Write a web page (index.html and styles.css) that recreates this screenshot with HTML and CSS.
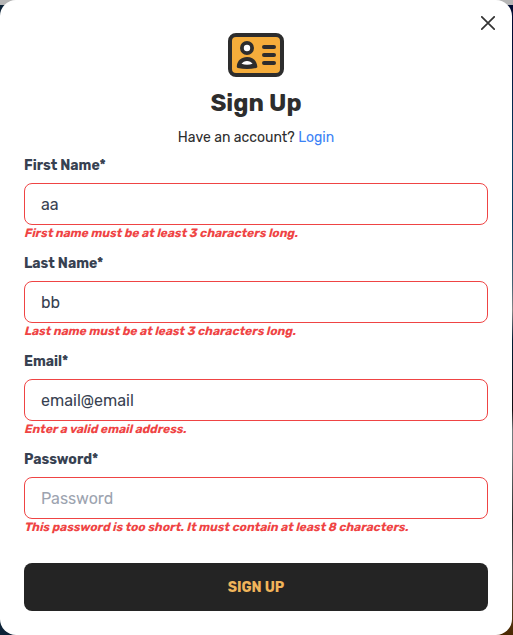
FILE: index.html
```html
<!DOCTYPE html>
<html lang="en">
<head>
<meta charset="utf-8">
<title>Sign Up</title>
<link rel="stylesheet" href="styles.css">
</head>
<body>
<main class="modal">
  <button class="close" aria-label="Close"><svg width="14" height="14" viewBox="0 0 14 14"><path d="M.8.8l12.4 12.4M13.2.8L.8 13.2" stroke="#333" stroke-width="1.7" stroke-linecap="round"/></svg></button>
  <header class="header">
    <svg class="logo" width="56" height="44" viewBox="0 0 56 44">
      <rect x="2" y="2" width="52" height="40" rx="6" fill="#f5ad3b" stroke="#2d2d2d" stroke-width="4"/>
      <circle cx="19" cy="15" r="5.1" fill="#fff" stroke="#2d2d2d" stroke-width="3.8"/>
      <path d="M8.8 33.500C9.200 27.500 13.500 24 19 24s9.800 3.500 10.300 9.500c.1.900-.4 1.300-1.100 1.500-6 1.200-12.300 1.200-18.400 0-.7-.2-1.100-.6-1-1.500z" fill="#2d2d2d"/>
      <path d="M13.500 30.800c1.300-1.900 3.100-2.900 5.500-2.900s4.400 1 5.600 2.900c-3.400 1.300-7.600 1.300-11.100 0z" fill="#fff"/>
      <path d="M36 14h10M36 22h10M36 30h10" stroke="#2d2d2d" stroke-width="4" stroke-linecap="round"/>
    </svg>
    <h1 class="title">Sign Up</h1>
    <p class="login"><span class="question">Have an account?</span> <a class="link">Login</a></p>
  </header>
  <form class="form">
    <div class="field">
      <label class="label" for="first">First Name*</label>
      <input class="input" id="first" value="aa">
      <p class="error">First name must be at least 3 characters long.</p>
    </div>
    <div class="field">
      <label class="label" for="last">Last Name*</label>
      <input class="input" id="last" value="bb">
      <p class="error">Last name must be at least 3 characters long.</p>
    </div>
    <div class="field">
      <label class="label" for="email">Email*</label>
      <input class="input" id="email" value="email@email">
      <p class="error">Enter a valid email address.</p>
    </div>
    <div class="field">
      <label class="label" for="password">Password*</label>
      <input class="input" id="password" type="password" placeholder="Password">
      <p class="error">This password is too short. It must contain at least 8 characters.</p>
    </div>
    <button class="submit" type="button">SIGN UP</button>
  </form>
</main>
</body>
</html>
```
FILE: styles.css
```css
* { box-sizing: border-box; }
body {
  margin: 0;
  height: 635px;
  overflow: hidden;
  font-family: Rubik, Roboto, sans-serif;
  background: linear-gradient(90deg, #0c2237 50%, transparent 50%),
    linear-gradient(#b5b5b5 0 5px, #000b32 5px 40px, #073b60 150px 220px, #476273 285px, #888 310px, #001b32 340px, #120b10 410px, #727a7c 430px 450px, #292929 520px, #555 570px, #50320f 620px, #4a2800);
}
.modal {
  position: relative;
  width: 512px;
  height: 635px;
  padding: 33px 24px 24px;
  background: #fff;
  border-radius: 16px;
}
.modal::before {
  content: "";
  position: absolute;
  z-index: -1;
  inset: 0 auto auto 0;
  width: 16px;
  height: 5px;
  background: #b5b5b5;
}
.close {
  position: absolute;
  top: 16px;
  right: 17px;
  padding: 0;
  border: 0;
  background: none;
}
.close svg { display: block; }
.header {
  display: flex;
  flex-direction: column;
  align-items: center;
}
.title {
  margin: 10px 0 0;
  font-size: 24px;
  line-height: 32px;
  font-weight: 700;
  color: #2d2d2d;
}
.login {
  margin: 9px 0 0;
  font-size: 14px;
  line-height: 20px;
  color: #2d2d2d;
}
.link { color: #3b82f6; }
.field { height: 98px; padding-top: 8px; }
.label {
  display: block;
  margin-bottom: 7px;
  font-size: 14px;
  line-height: 20px;
  font-weight: 700;
  color: #374151;
}
.input {
  display: block;
  width: 464px;
  height: 42px;
  padding: 8px 16px;
  border: 1px solid #ef4444;
  border-radius: 8px;
  background: #fff;
  font: 16px/24px Rubik, Roboto, sans-serif;
  color: #374151;
}
.input::placeholder { color: #9ca3af; }
.error {
  margin: 0;
  font-size: 12px;
  line-height: 16px;
  font-weight: 700;
  color: #ef4444;
  white-space: nowrap;
  transform: skewX(-14deg);
  transform-origin: 0 12px;
}
.submit {
  display: block;
  width: 464px;
  height: 48px;
  margin-top: 23px;
  padding: 2px 6px 0;
  border: 0;
  border-radius: 8px;
  background: #242424;
  font: 700 14px/20px Rubik, Roboto, sans-serif;
  color: #f0b45a;
}
```
